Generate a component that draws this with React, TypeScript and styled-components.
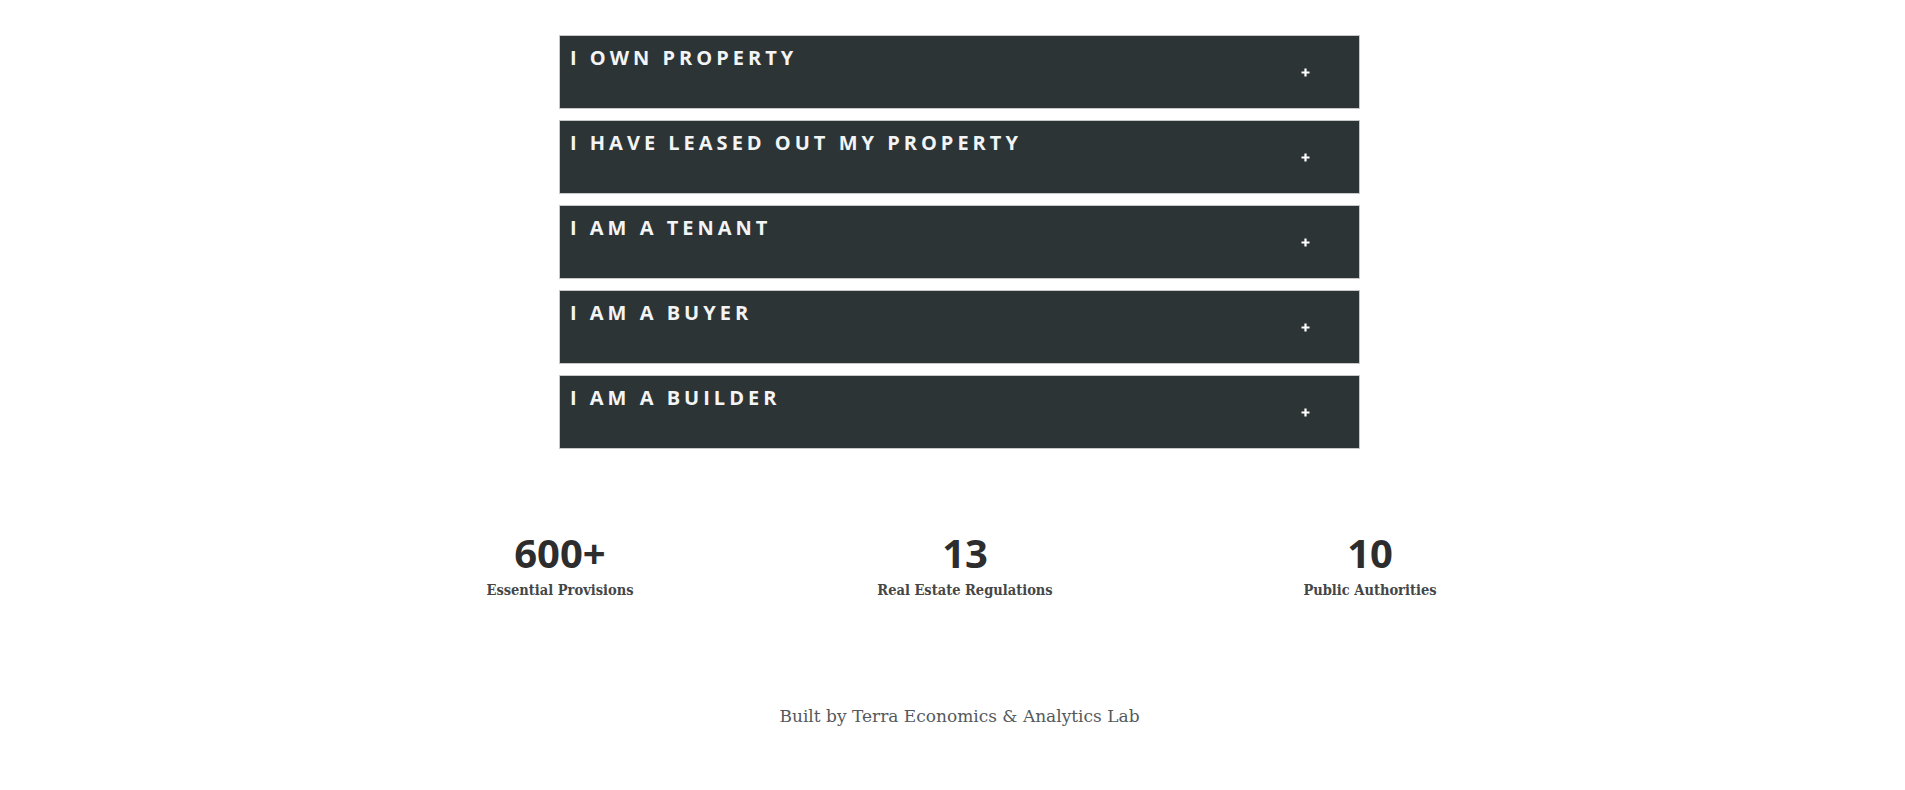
import React from "react";
import styled, { createGlobalStyle } from "styled-components";

const Global = createGlobalStyle`
  html, body { margin: 0; padding: 0; background: #ffffff; }
  body { font-family: "Open Sans", "Liberation Sans", sans-serif; }
`;

const Page = styled.main`
  display: flex;
  flex-direction: column;
  align-items: center;
  padding: 35px 0 0 14px;
`;

const Accordion = styled.section`
  width: 801px;
  display: flex;
  flex-direction: column;
  gap: 11px;
`;

const Item = styled.div`
  box-sizing: border-box;
  height: 74px;
  border: 1px solid #c8c8c8;
  background: #2d3436;
  display: flex;
  align-items: flex-start;
  justify-content: space-between;
  padding: 8px 49px 0 10px;
`;

const Title = styled.h3`
  margin: 0;
  font-family: "Open Sans", "Liberation Sans", sans-serif;
  font-weight: 700;
  font-size: 20px;
  line-height: 27px;
  letter-spacing: 4px;
  text-transform: uppercase;
  color: #f2f4f6;
`;

const Plus = styled.svg`
  align-self: center;
  margin-top: -8px;
  flex: none;
`;

const Stats = styled.section`
  width: 1215px;
  display: grid;
  grid-template-columns: repeat(3, 1fr);
  margin: 80px 0 0 11px;
`;

const Stat = styled.div`
  display: flex;
  flex-direction: column;
  align-items: center;
`;

const Number = styled.div`
  font-family: "Open Sans", "Liberation Sans", sans-serif;
  font-weight: 700;
  font-size: 40px;
  line-height: 48px;
  color: #2d2d2d;
`;

const Label = styled.div`
  margin-top: 2px;
  font-family: "DejaVu Serif", "Liberation Serif", serif;
  font-stretch: condensed;
  font-weight: 700;
  font-size: 14.5px;
  line-height: 22px;
  color: #444648;
`;

const Footer = styled.footer`
  margin-top: 103px;
  font-family: "DejaVu Serif", "Liberation Serif", serif;
  font-weight: 300;
  font-size: 17px;
  line-height: 24px;
  color: #55595c;
`;

const items = [
  "I own property",
  "I have leased out my property",
  "I am a tenant",
  "I am a buyer",
  "I am a builder",
];

const stats = [
  { n: "600+", l: "Essential Provisions" },
  { n: "13", l: "Real Estate Regulations" },
  { n: "10", l: "Public Authorities" },
];

export default function App() {
  return (
    <>
      <Global />
      <Page>
        <Accordion>
          {items.map((t) => (
            <Item key={t}>
              <Title>{t}</Title>
              <Plus width="9" height="9" viewBox="0 0 9 9">
                <path d="M4.5 0.5v8M0.5 4.5h8" stroke="#ffffff" strokeWidth="2.2" />
              </Plus>
            </Item>
          ))}
        </Accordion>
        <Stats>
          {stats.map((s) => (
            <Stat key={s.l}>
              <Number>{s.n}</Number>
              <Label>{s.l}</Label>
            </Stat>
          ))}
        </Stats>
        <Footer>Built by Terra Economics &amp; Analytics Lab</Footer>
      </Page>
    </>
  );
}
